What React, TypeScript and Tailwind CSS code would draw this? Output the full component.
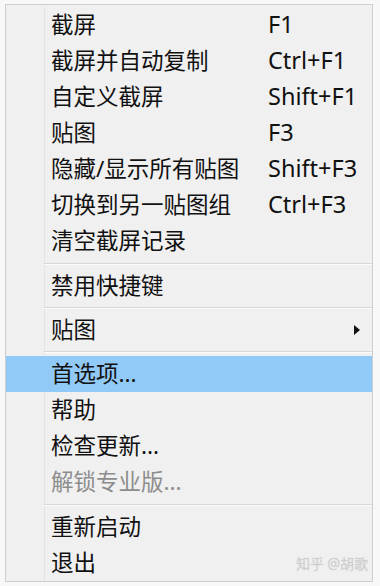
type Item = {
  label: string;
  shortcut?: string;
  disabled?: boolean;
  active?: boolean;
  submenu?: boolean;
};

const groups: { items: Item[]; gap: string }[] = [
  {
    gap: "h-[9px]",
    items: [
      { label: "截屏", shortcut: "F1" },
      { label: "截屏并自动复制", shortcut: "Ctrl+F1" },
      { label: "自定义截屏", shortcut: "Shift+F1" },
      { label: "贴图", shortcut: "F3" },
      { label: "隐藏/显示所有贴图", shortcut: "Shift+F3" },
      { label: "切换到另一贴图组", shortcut: "Ctrl+F3" },
      { label: "清空截屏记录" },
    ],
  },
  { gap: "h-2", items: [{ label: "禁用快捷键" }] },
  { gap: "h-2", items: [{ label: "贴图", submenu: true }] },
  {
    gap: "h-[9px]",
    items: [
      { label: "首选项...", active: true },
      { label: "帮助" },
      { label: "检查更新..." },
      { label: "解锁专业版...", disabled: true },
    ],
  },
  { gap: "", items: [{ label: "重新启动" }, { label: "退出" }] },
];

function Row({ item }: { item: Item }) {
  return (
    <div
      className={`relative flex h-9 items-center ${
        item.active ? "bg-[#91c9f7]" : ""
      }`}
    >
      <div className="w-[38px] shrink-0 self-stretch">
        {!item.active && <div className="ml-[38px] h-full w-px bg-[#e3e3e3]" />}
      </div>
      <span
        className={`w-[224px] shrink-0 pl-[7px] text-[22.5px] ${
          item.disabled ? "text-[#8d8d8d]" : "text-[#111]"
        }`}
      >
        {item.label}
      </span>
      <span className="text-[23.5px] text-[#111]">{item.shortcut}</span>
      {item.submenu && (
        <svg
          className="absolute right-[12px] top-[13px]"
          width="6"
          height="10"
          viewBox="0 0 6 10"
        >
          <path d="M0 0 L6 5 L0 10 Z" fill="#111" />
        </svg>
      )}
    </div>
  );
}

export default function App() {
  return (
    <div className="h-[586px] w-[380px] bg-[#f8f8f8] pl-[5px] pt-[4px]">
      <div
        className="relative w-[368px] border border-[#cfcfcf] bg-[#f0f0f0] pt-[2px] leading-none"
        style={{ fontFamily: '"Noto Sans", "Noto Sans CJK SC", sans-serif' }}
      >
        {groups.map((g, gi) => (
          <div key={gi}>
            {g.items.map((item, i) => (
              <Row key={i} item={item} />
            ))}
            {g.gap && (
              <div className={`flex ${g.gap}`}>
                <div className="w-[38px] shrink-0">
                  <div className="ml-[38px] h-full w-px bg-[#e3e3e3]" />
                </div>
                <div className="flex flex-1 flex-col justify-center">
                  <div className="h-px bg-[#d7d7d7]" />
                  <div className="h-px bg-[#fbfbfb]" />
                </div>
              </div>
            )}
          </div>
        ))}
        <span className="absolute bottom-[10px] right-[4px] text-[14px] font-light text-[#d0d0d0] [text-shadow:0_0_1px_#b5b5b5]">
          知乎 @胡歌
        </span>
      </div>
    </div>
  );
}
